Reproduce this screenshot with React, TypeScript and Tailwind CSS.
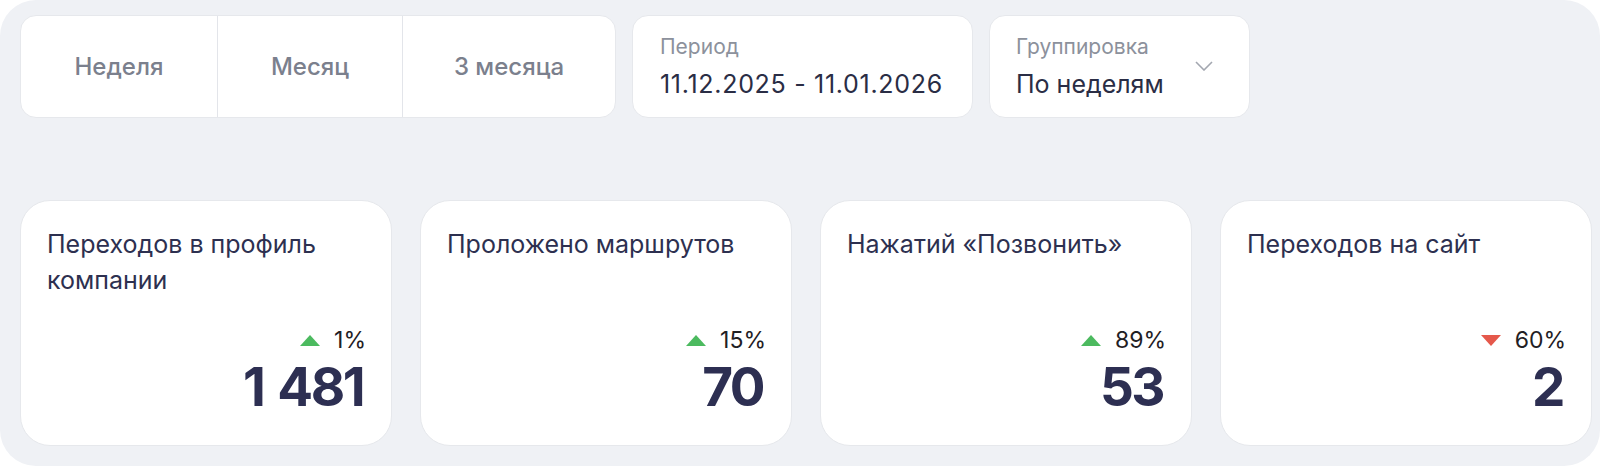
import React from "react";

const font = { fontFamily: "Inter, 'Noto Sans', sans-serif" };

function Up() {
  return (
    <svg width="20" height="11" viewBox="0 0 20 11" className="shrink-0">
      <polygon points="10,0 20,11 0,11" fill="#4cba5f" />
    </svg>
  );
}

function Down() {
  return (
    <svg width="20" height="11" viewBox="0 0 20 11" className="shrink-0">
      <polygon points="0,0 20,0 10,11" fill="#e5584b" />
    </svg>
  );
}

type Card = { title: string; pct: string; up: boolean; value: string };

const cards: Card[] = [
  { title: "Переходов в профиль компании", pct: "1%", up: true, value: "1 481" },
  { title: "Проложено маршрутов", pct: "15%", up: true, value: "70" },
  { title: "Нажатий «Позвонить»", pct: "89%", up: true, value: "53" },
  { title: "Переходов на сайт", pct: "60%", up: false, value: "2" },
];

const segments = [
  { t: "Неделя", w: "w-[196px]" },
  { t: "Месяц", w: "w-[185px]" },
  { t: "3 месяца", w: "w-[213px]" },
];

export default function App() {
  return (
    <div className="w-[1600px] h-[468px] bg-white" style={font}>
      <div className="h-[466px] rounded-[36px] bg-[#eff1f5] pl-[20px] pr-[8px] pt-[15px]">
        <div className="flex gap-[16px] h-[103px]">
          <div className="flex bg-white rounded-[16px] border border-[#e6e8ec] overflow-hidden">
            {segments.map((s, i) => (
              <div
                key={s.t}
                className={
                  "flex items-center justify-center text-[24px] font-medium text-[#7b808d] " +
                  s.w +
                  (i > 0 ? " border-l border-[#e3e5ea]" : "")
                }
              >
                {s.t}
              </div>
            ))}
          </div>
          <div className="w-[341px] bg-white rounded-[16px] border border-[#e6e8ec] px-[27px] flex flex-col justify-center gap-[8px]">
            <div className="text-[21px] leading-[26px] text-[#8c919c]">Период</div>
            <div className="text-[25px] leading-[32px] tracking-[0.7px] text-[#2a2d45] whitespace-nowrap">
              11.12.2025 - 11.01.2026
            </div>
          </div>
          <div className="w-[261px] bg-white rounded-[16px] border border-[#e6e8ec] pl-[26px] pr-[36px] flex items-center justify-between">
            <div className="flex flex-col gap-[8px]">
              <div className="text-[21px] leading-[26px] text-[#8c919c]">Группировка</div>
              <div className="text-[25px] leading-[32px] text-[#2a2d45]">По неделям</div>
            </div>
            <svg width="18" height="10" viewBox="0 0 18 10" className="-mt-[2px]">
              <polyline points="1,1 9,9 17,1" fill="none" stroke="#a3a7b0" strokeWidth="1.6" />
            </svg>
          </div>
        </div>
        <div className="mt-[82px] grid grid-cols-4 gap-[28px]">
          {cards.map((c) => (
            <div
              key={c.title}
              className="h-[246px] flex flex-col bg-white rounded-[30px] border border-[#e6e8ec] pl-[26px] pr-[25px] pt-[25px] pb-[31px]"
            >
              <div className="text-[25px] leading-[36px] text-[#2d3050] pr-[30px]">{c.title}</div>
              <div className="mt-auto flex justify-end items-center gap-[14px]">
                {c.up ? <Up /> : <Down />}
                <span className="text-[23px] leading-[28px] text-[#1f2024]">{c.pct}</span>
              </div>
              <div className="mt-[7px] flex justify-end items-baseline text-[53px] leading-none font-bold tracking-[-2.5px] pr-[3px] text-[#2d2f52]">
                {c.value.split(" ").map((p, i) => (
                  <span key={i} className={i > 0 ? "ml-[14px]" : ""}>
                    {p}
                  </span>
                ))}
              </div>
            </div>
          ))}
        </div>
      </div>
    </div>
  );
}
